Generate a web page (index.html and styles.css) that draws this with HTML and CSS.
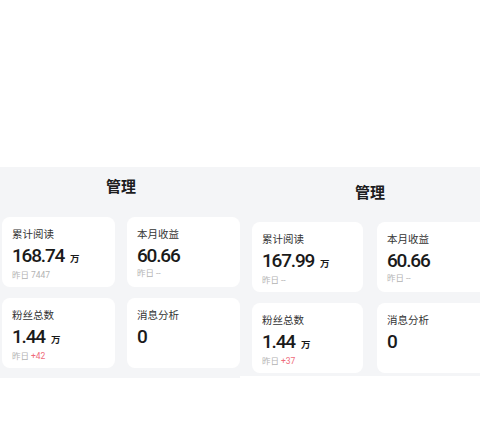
FILE: index.html
```html
<!DOCTYPE html>
<html lang="zh-CN">
<head>
<meta charset="utf-8">
<title>管理</title>
<link rel="stylesheet" href="styles.css">
</head>
<body>
<div class="stage">
  <section class="panel panel-left">
    <h1 class="title">管理</h1>
    <div class="grid">
      <div class="card">
        <div class="label">累计阅读</div>
        <div class="value">168.74<span class="unit">万</span></div>
        <div class="sub">昨日 <span class="num">7447</span></div>
      </div>
      <div class="card">
        <div class="label">本月收益</div>
        <div class="value">60.66</div>
        <div class="sub">昨日 <span class="num">--</span></div>
      </div>
      <div class="card">
        <div class="label">粉丝总数</div>
        <div class="value">1.44<span class="unit">万</span></div>
        <div class="sub">昨日 <span class="num up">+42</span></div>
      </div>
      <div class="card">
        <div class="label">消息分析</div>
        <div class="value">0</div>
      </div>
    </div>
  </section>
  <section class="panel panel-right">
    <h1 class="title">管理</h1>
    <div class="grid">
      <div class="card">
        <div class="label">累计阅读</div>
        <div class="value">167.99<span class="unit">万</span></div>
        <div class="sub">昨日 <span class="num">--</span></div>
      </div>
      <div class="card">
        <div class="label">本月收益</div>
        <div class="value">60.66</div>
        <div class="sub">昨日 <span class="num">--</span></div>
      </div>
      <div class="card">
        <div class="label">粉丝总数</div>
        <div class="value">1.44<span class="unit">万</span></div>
        <div class="sub">昨日 <span class="num up">+37</span></div>
      </div>
      <div class="card">
        <div class="label">消息分析</div>
        <div class="value">0</div>
      </div>
    </div>
  </section>
</div>
</body>
</html>
```
FILE: styles.css
```css
html, body {
  margin: 0;
  padding: 0;
  background: #ffffff;
  overflow: hidden;
  width: 480px;
  height: 440px;
}

.stage {
  display: flex;
  align-items: flex-start;
  padding-top: 167px;
  width: 520px;
}

.panel {
  flex: none;
  background: #f4f5f7;
  box-sizing: border-box;
  font-family: "Noto Sans CJK SC", "Noto Sans", sans-serif;
}

.panel-left {
  width: 240px;
  padding: 9px 0 10px 2px;
}

.panel-right {
  width: 260px;
  padding: 15px 12px 3px 12px;
}

.title {
  margin: 0;
  font-size: 15px;
  line-height: 20px;
  font-weight: 700;
  color: #1c1c1e;
  text-align: center;
}

.panel-left .title { margin-bottom: 21px; }
.panel-right .title { margin-bottom: 20px; }

.grid {
  display: grid;
  grid-auto-rows: 70px;
  row-gap: 11px;
}

.panel-left .grid {
  grid-template-columns: 113px 113px;
  column-gap: 12px;
}

.panel-right .grid {
  grid-template-columns: 111px 111px;
  column-gap: 14px;
}

.card {
  background: #ffffff;
  border-radius: 8px;
  padding: 10px 10px 0 10px;
  box-sizing: border-box;
}

.label {
  font-size: 10.5px;
  line-height: 14px;
  color: #333333;
}

.value {
  margin-top: 4px;
  font-family: Roboto, "Noto Sans", sans-serif;
  font-weight: 500;
  font-size: 19px;
  line-height: 22px;
  letter-spacing: -1.2px;
  color: #1a1a1a;
  white-space: nowrap;
}

.unit {
  font-family: "Noto Sans CJK SC", sans-serif;
  font-size: 9.5px;
  font-weight: 700;
  letter-spacing: 0;
  margin-left: 6px;
  color: #1a1a1a;
}

.sub {
  font-size: 8.5px;
  line-height: 10px;
  color: #b3b3b3;
  white-space: nowrap;
}

.num {
  font-family: Roboto, "Noto Sans", sans-serif;
}

.up {
  color: #ef6b7b;
}
```
